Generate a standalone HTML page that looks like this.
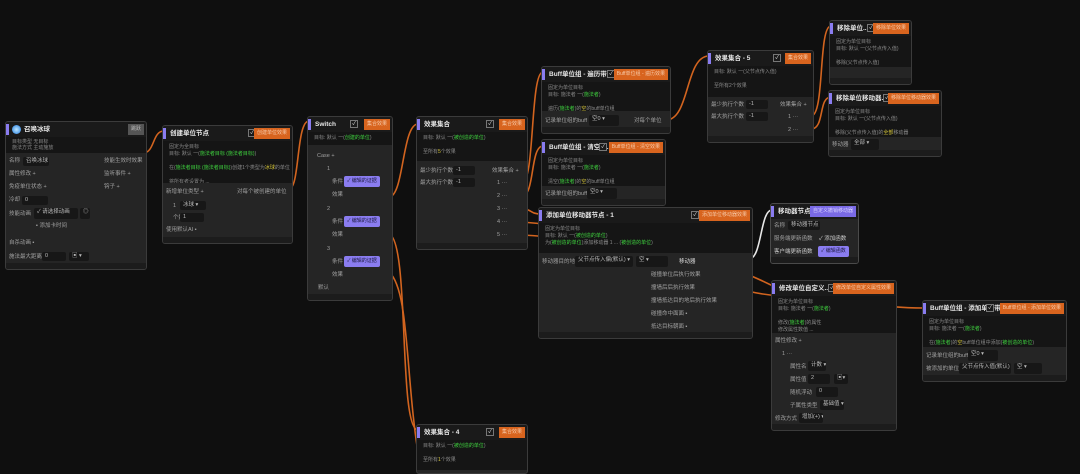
<!DOCTYPE html>
<html><head><meta charset="utf-8"><style>
*{margin:0;padding:0;box-sizing:border-box}
body{width:1080px;height:465px;background:#0f0f0f;overflow:hidden;position:relative;font-family:"Liberation Sans","Noto Sans CJK SC",sans-serif;font-size:6px;color:#9a9a9a}
.n{position:absolute;background:#252525;border:1px solid #3b3b3b;border-radius:3px;overflow:hidden}
.h{position:relative;height:15px;background:#1a1a1a;color:#e6e6e6;font-size:6.5px;font-weight:bold;line-height:15px;padding-left:7px;white-space:nowrap;overflow:hidden}
.h:before{content:"";position:absolute;left:0;top:2px;width:3px;height:11px;background:#8a7cf0}
.tag{position:absolute;right:2px;top:2px;height:11px;background:#d8641e;color:#f6c9a8;font-size:5px;font-weight:normal;line-height:11px;padding:0 3px;white-space:nowrap}
.tag.p{background:#7a6ae6;color:#d6d0ff}
.ck{position:absolute;top:3px;width:8px;height:8px;border:1px solid #777;background:#1a1a1a;font-size:5px;line-height:6px;text-align:center;color:#bbb}
.d{background:#151515;padding:3px 6px;line-height:7px;font-size:5px;color:#8a8a8a;overflow:hidden;white-space:nowrap}
.g{color:#3fd23f}.y{color:#d8c83a}
.r{position:absolute;font-size:5.5px;color:#a0a0a0;white-space:nowrap;line-height:9px}
.in{position:absolute;height:9px;background:#171717;border-radius:2px;color:#bbb;font-size:5.5px;line-height:9px;padding-left:3px;overflow:hidden;white-space:nowrap}
.btn{position:absolute;height:11px;background:#8a7cf0;color:#1e1a40;font-size:5px;line-height:11px;padding:0 3px;border-radius:2px;white-space:nowrap}
.ft{position:absolute;bottom:0;left:0;right:0;height:6px;background:#1c1c1c}
</style></head><body>
<svg width="1080" height="465" style="position:absolute;left:0;top:0" fill="none" stroke="#d2641f" stroke-width="1.6">
<path d="M143 153 C155 153,152 131,164 131"/>
<path d="M289 189 C300 189,296 121,309 121"/>
<path d="M389 197 C404 197,402 124,418 124"/>
<path d="M389 234 C410 240,398 430,418 430"/>
<path d="M389 272 C410 290,405 380,420 465"/>
<path d="M522 183 C535 183,530 72,543 72"/>
<path d="M522 196 C535 196,530 146,543 146"/>
<path d="M522 209 C532 209,530 214,541 214"/>
<path d="M522 222 C620 230,700 250,773 286"/>
<path d="M522 235 C640 240,700 290,780 296 C850 300,880 308,924 308"/>
<path d="M666 120 C690 120,685 56,709 56"/>
<path d="M811 116 C825 116,818 26,831 26"/>
<path d="M811 129 C825 129,818 97,831 97"/>
<path d="M749 259 C762 259,760 210,772 210" stroke="#e8e8e8"/>
</svg>

<div class="n" style="left:5px;top:121px;width:142px;height:149px">
<div class="h" style="padding-left:18px"><span style="position:absolute;left:6px;top:3px;width:9px;height:9px;border-radius:50%;background:radial-gradient(#bfe6ff,#1c7be0)"></span>召唤冰球<span class="tag" style="background:#555;color:#bbb">跳跃</span></div>
<div class="d" style="height:16px;line-height:6px;padding-top:2px">目标类型 无目标<br>施法方式 主动施放</div>
<div class="r" style="left:3px;top:35px">名称</div><div class="in" style="left:17px;top:35px;width:26px">召唤冰球</div>
<div class="r" style="left:98px;top:35px">技能生效时效果</div>
<div class="r" style="left:3px;top:48px">属性修改 +</div><div class="r" style="left:98px;top:48px">监听事件 +</div>
<div class="r" style="left:3px;top:61px">免疫单位状态 +</div><div class="r" style="left:98px;top:61px">钩子 +</div>
<div class="r" style="left:3px;top:74px">冷却</div><div class="in" style="left:16px;top:74px;width:26px">0</div>
<div class="r" style="left:3px;top:88px">技能动画</div><div class="in" style="left:28px;top:86px;width:44px;height:11px">✓ 请选择动画</div><div class="in" style="left:74px;top:86px;width:10px;height:11px">◎</div>
<div class="r" style="left:30px;top:100px">▪ 添加卡时间</div>
<div class="r" style="left:3px;top:117px">自杀动画 ▪</div>
<div class="r" style="left:3px;top:131px">施法最大距离</div><div class="in" style="left:36px;top:130px;width:24px">0</div><div class="in" style="left:63px;top:130px;width:20px">▣ ▾</div>
<div class="ft"></div></div>

<div class="n" style="left:162px;top:125px;width:131px;height:119px">
<div class="h">创建单位节点<span class="ck" style="right:36px">✓</span><span class="tag">创建单位效果</span></div>
<div class="d" style="height:42px">固定为全目标<br>目标: 默认 一(<span class="g">施法者目标 (施法者目标)</span>)<br><br>在(<span class="g">施法者目标 (施法者目标)</span>)创建1个类型为<span class="y">冰球</span>的单位<br><br>将所有者设置为 ...</div>
<div class="r" style="left:3px;top:62px">新增单位类型 +</div><div class="r" style="left:74px;top:62px">对每个被创建的单位</div>
<div class="r" style="left:10px;top:76px">1</div><div class="in" style="left:17px;top:75px;width:26px">冰球 ▾</div>
<div class="r" style="left:10px;top:88px">个数</div><div class="in" style="left:17px;top:87px;width:24px">1</div>
<div class="r" style="left:3px;top:100px">使用默认AI ▪</div>
<div class="ft"></div></div>

<div class="n" style="left:307px;top:116px;width:86px;height:185px">
<div class="h">Switch<span class="ck" style="right:34px">✓</span><span class="tag">集合效果</span></div>
<div class="d" style="height:13px">目标: 默认 一(<span class="g">创建的单位</span>)</div>
<div class="r" style="left:9px;top:35px">Case +</div>
<div class="r" style="left:19px;top:48px">1</div><div class="r" style="left:24px;top:61px">条件</div><div class="btn" style="left:36px;top:59px">✓ 编辑的证据</div><div class="r" style="left:24px;top:74px">效果</div>
<div class="r" style="left:19px;top:88px">2</div><div class="r" style="left:24px;top:101px">条件</div><div class="btn" style="left:36px;top:99px">✓ 编辑的证据</div><div class="r" style="left:24px;top:114px">效果</div>
<div class="r" style="left:19px;top:128px">3</div><div class="r" style="left:24px;top:141px">条件</div><div class="btn" style="left:36px;top:139px">✓ 编辑的证据</div><div class="r" style="left:24px;top:154px">效果</div>
<div class="r" style="left:10px;top:167px">默认</div>
<div class="ft"></div></div>

<div class="n" style="left:416px;top:116px;width:112px;height:134px">
<div class="h">效果集合<span class="ck" style="right:33px">✓</span><span class="tag">集合效果</span></div>
<div class="d" style="height:29px">目标: 默认 一(<span class="g">被创造的单位</span>)<br><br>至所有<span class="y">5</span>个效果</div>
<div class="r" style="left:3px;top:50px">最少执行个数</div><div class="in" style="left:36px;top:49px;width:22px">-1</div>
<div class="r" style="left:3px;top:62px">最大执行个数</div><div class="in" style="left:36px;top:61px;width:22px">-1</div>
<div class="r" style="left:75px;top:50px">效果集合 +</div>
<div class="r" style="left:80px;top:62px">1 ···</div><div class="r" style="left:80px;top:75px">2 ···</div><div class="r" style="left:80px;top:88px">3 ···</div><div class="r" style="left:80px;top:101px">4 ···</div><div class="r" style="left:80px;top:114px">5 ···</div>
<div class="ft"></div></div>

<div class="n" style="left:541px;top:66px;width:130px;height:68px">
<div class="h">Buff单位组 - 遍历带...<span class="ck" style="right:55px">✓</span><span class="tag">Buff单位组 - 遍历效果</span></div>
<div class="d" style="height:29px">固定为单位目标<br>目标: 施法者 一(<span class="g">施法者</span>)<br><br>遍历(<span class="g">施法者</span>)的<span class="y">空</span>的buff单位组</div>
<div class="r" style="left:3px;top:50px">记录单位组的buff</div><div class="in" style="left:47px;top:48px;width:30px;height:11px">空0 ▾</div>
<div class="r" style="left:92px;top:50px">对每个单位</div>
<div class="ft"></div></div>

<div class="n" style="left:541px;top:139px;width:125px;height:67px">
<div class="h">Buff单位组 - 清空带...<span class="ck" style="right:58px">✓</span><span class="tag">Buff单位组 - 清空效果</span></div>
<div class="d" style="height:31px">固定为单位目标<br>目标: 施法者 一(<span class="g">施法者</span>)<br><br>清空(<span class="g">施法者</span>)的<span class="y">空</span>的buff单位组</div>
<div class="r" style="left:3px;top:50px">记录单位组的buff</div><div class="in" style="left:45px;top:48px;width:30px;height:11px">空0 ▾</div>
<div class="ft"></div></div>

<div class="n" style="left:538px;top:207px;width:215px;height:132px">
<div class="h">添加单位移动器节点 - 1<span class="ck" style="right:53px">✓</span><span class="tag">添加单位移动器效果</span></div>
<div class="d" style="height:30px">固定为单位目标<br>目标: 默认 一(<span class="g">被创造的单位</span>)<br>为(<span class="g">被创造的单位</span>)添加移动器 1 ... (<span class="g">被创造的单位</span>)</div>
<div class="r" style="left:3px;top:50px">移动器目的地</div><div class="in" style="left:36px;top:48px;width:58px;height:11px">父节点传入偏(默认) ▾</div><div class="in" style="left:97px;top:48px;width:32px;height:11px">空 ▾</div>
<div class="r" style="left:140px;top:50px;color:#ddd">移动器</div>
<div class="r" style="left:112px;top:63px">碰撞单位后执行效果</div>
<div class="r" style="left:112px;top:76px">撞墙后后执行效果</div>
<div class="r" style="left:112px;top:89px">撞墙抵达目的地后执行效果</div>
<div class="r" style="left:112px;top:102px">碰撞命中面面 ▪</div>
<div class="r" style="left:112px;top:115px">抵达目标朝面 ▪</div>
<div class="ft"></div></div>

<div class="n" style="left:707px;top:50px;width:107px;height:93px">
<div class="h">效果集合 - 5<span class="ck" style="right:32px">✓</span><span class="tag">集合效果</span></div>
<div class="d" style="height:31px">目标: 默认 一(父节点传入值)<br><br>至所有2个效果</div>
<div class="r" style="left:3px;top:50px">最少执行个数</div><div class="in" style="left:38px;top:49px;width:22px">-1</div>
<div class="r" style="left:3px;top:62px">最大执行个数</div><div class="in" style="left:38px;top:61px;width:22px">-1</div>
<div class="r" style="left:72px;top:50px">效果集合 +</div><div class="r" style="left:80px;top:62px">1 ···</div><div class="r" style="left:80px;top:75px">2 ···</div>
<div class="ft"></div></div>

<div class="n" style="left:829px;top:20px;width:83px;height:65px">
<div class="h">移除单位...<span class="ck" style="right:36px">✓</span><span class="tag">移除单位效果</span></div>
<div class="d" style="height:31px">固定为单位目标<br>目标: 默认 一(父节点传入值)<br><br>移除(父节点传入值)</div>
<div class="ft"></div></div>

<div class="n" style="left:828px;top:90px;width:114px;height:67px">
<div class="h">移除单位移动器...<span class="ck" style="right:50px">✓</span><span class="tag">移除单位移动器效果</span></div>
<div class="d" style="height:31px">固定为单位目标<br>目标: 默认 一(父节点传入值)<br><br>移除(父节点传入值)的<span class="y">全部</span>移动器</div>
<div class="r" style="left:3px;top:50px">移动器</div><div class="in" style="left:22px;top:48px;width:28px;height:11px">全部 ▾</div>
<div class="ft"></div></div>

<div class="n" style="left:770px;top:203px;width:89px;height:61px;border-color:#4a4a4a">
<div class="h">移动器节点 - 1<span class="tag p">自定义撤销移动器</span></div>
<div class="r" style="left:3px;top:18px">名称</div><div class="in" style="left:17px;top:17px;width:32px">移动器节点</div>
<div class="r" style="left:3px;top:31px">服务端更新函数</div><div class="r" style="left:48px;top:31px;color:#ccc">✓ 添加函数</div>
<div class="r" style="left:3px;top:44px;color:#ccc">客户端更新函数</div><div class="btn" style="left:47px;top:42px">✓ 编辑函数</div>
<div class="ft"></div></div>

<div class="n" style="left:771px;top:280px;width:126px;height:151px">
<div class="h">修改单位自定义...<span class="ck" style="right:60px">✓</span><span class="tag">修改单位自定义属性效果</span></div>
<div class="d" style="height:37px">固定为单位目标<br>目标: 施法者 一(<span class="g">施法者</span>)<br><br>修改(<span class="g">施法者</span>)的属性<br>修改属性数值 ...</div>
<div class="r" style="left:3px;top:56px">属性修改 +</div>
<div class="r" style="left:10px;top:69px">1 ···</div>
<div class="r" style="left:18px;top:82px">属性名</div><div class="in" style="left:36px;top:80px;width:18px;height:10px">计数 ▾</div>
<div class="r" style="left:18px;top:95px">属性值</div><div class="in" style="left:36px;top:93px;width:22px;height:10px">2</div><div class="in" style="left:62px;top:93px;width:14px;height:10px">▣▾</div>
<div class="r" style="left:18px;top:108px">随机浮动</div><div class="in" style="left:44px;top:106px;width:22px;height:10px">0</div>
<div class="r" style="left:18px;top:121px">子属性类型</div><div class="in" style="left:48px;top:119px;width:24px;height:10px">基础值 ▾</div>
<div class="r" style="left:3px;top:134px">修改方式</div><div class="in" style="left:27px;top:132px;width:24px;height:10px">增加(+) ▾</div>
<div class="ft"></div></div>

<div class="n" style="left:922px;top:300px;width:145px;height:82px">
<div class="h">Buff单位组 - 添加单位带...<span class="ck" style="right:72px">✓</span><span class="tag">Buff单位组 - 添加单位效果</span></div>
<div class="d" style="height:31px">固定为单位目标<br>目标: 施法者 一(<span class="g">施法者</span>)<br><br>在(<span class="g">施法者</span>)的<span class="y">空</span>buff单位组中添加(<span class="g">被创造的单位</span>)</div>
<div class="r" style="left:3px;top:51px">记录单位组的buff</div><div class="in" style="left:45px;top:49px;width:30px;height:11px">空0 ▾</div>
<div class="r" style="left:3px;top:64px">被添加的单位</div><div class="in" style="left:36px;top:62px;width:52px;height:11px">父节点传入值(默认) ▾</div><div class="in" style="left:91px;top:62px;width:28px;height:11px">空 ▾</div>
<div class="ft"></div></div>

<div class="n" style="left:416px;top:424px;width:112px;height:50px">
<div class="h">效果集合 - 4<span class="ck" style="right:33px">✓</span><span class="tag">集合效果</span></div>
<div class="d" style="height:30px">目标: 默认 一(<span class="g">被创造的单位</span>)<br><br>至所有<span class="y">1</span>个效果</div>
</div>
</body></html>
